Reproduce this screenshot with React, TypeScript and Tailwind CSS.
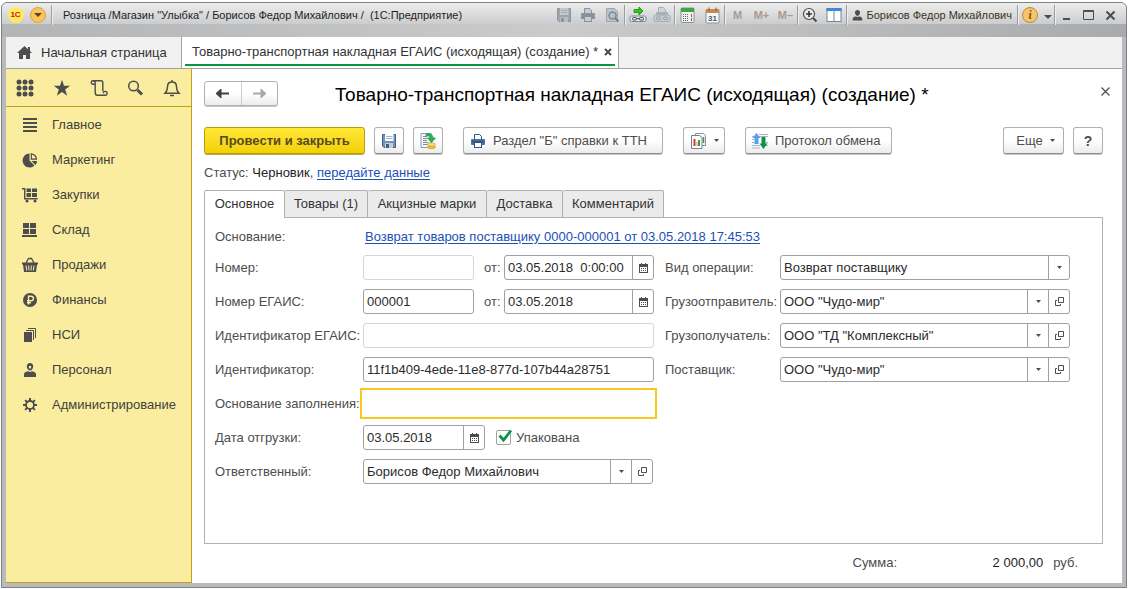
import { useState } from "react";
import type { ReactNode } from "react";
import { clsx } from "clsx";

const ink = "#4d4d4d";

function Separator() {
  return <span className="h-5 w-px shrink-0 bg-[#9b9c9e] shadow-[1px_0_0_#eeeeee]" />;
}

/* ---------- icons ---------- */

function FloppyIcon({ muted = false }: { muted?: boolean }) {
  const body = muted ? "#9aa5af" : "#6f93bd";
  const edge = muted ? "#8a959f" : "#3f5f88";
  const paper = muted ? "#c3c8cc" : "#ffffff";
  return (
    <svg width="16" height="16" viewBox="0 0 16 16">
      <path d="M1.500 1.500h13v13H3l-1.500-1.500z" fill={body} stroke={edge} />
      <rect x="4" y="1" width="8.500" height="7" fill={paper} />
      <path d="M5 3.500h6.500M5 5.500h6.500" stroke={muted ? "#a7b0b7" : "#9db8d6"} />
      <rect x="4" y="10" width="8" height="5" fill={muted ? "#b6bdc3" : "#c9cdd2"} />
      <rect x="5" y="11" width="3" height="4" fill={edge} />
    </svg>
  );
}

function PrinterIcon({ muted = false }: { muted?: boolean }) {
  const body = muted ? "#87929c" : "#48719a";
  const edge = muted ? "#87929c" : "#34557a";
  return (
    <svg width="16" height="16" viewBox="0 0 16 16" className="shrink-0">
      <path d="M4.500 6V1.500h5l2 2V6" fill={muted ? "#c9cdd0" : "#fff"} stroke={edge} />
      <rect x="1" y="6" width="14" height="6" rx="1" fill={body} />
      <path d="M2 8.500h12" stroke={edge} />
      <rect x="4.500" y="9.500" width="7" height="5" fill={muted ? "#c9cdd0" : "#fff"} stroke={edge} />
    </svg>
  );
}

function PreviewIcon() {
  return (
    <svg width="16" height="16" viewBox="0 0 16 16">
      <path d="M2.500 1.500h8l3 3v10h-11z" fill="#bfc5c9" stroke="#9da6ad" />
      <circle cx="8.500" cy="8.500" r="3.500" fill="#b4c1ca" stroke="#7d8a95" strokeWidth="1.500" />
      <path d="m11 11 3.500 3.500" stroke="#75828d" strokeWidth="2" />
    </svg>
  );
}

function LinkBarIcon() {
  return (
    <svg width="18" height="18" viewBox="0 0 18 18">
      <path d="M5 3.500h5V1l4 4-4 4V6.500H5z" fill="#2ecc18" stroke="#17860b" strokeWidth=".8" />
      <rect x="1" y="10" width="16" height="5.500" rx="1.500" fill="#e6e8ea" stroke="#7d8791" />
      <rect x="3.500" y="11.500" width="4" height="2.500" rx="1" fill="none" stroke="#3d4853" />
      <rect x="10.500" y="11.500" width="4" height="2.500" rx="1" fill="none" stroke="#3d4853" />
      <path d="M7 12.700h4" stroke="#3d4853" />
    </svg>
  );
}

function LinkPrinterIcon() {
  return (
    <svg width="18" height="18" viewBox="0 0 18 18">
      <path d="M5.500 8V1.500h5l2 2V8" fill="#d2d5d7" stroke="#a9b0b7" />
      <rect x="3" y="6" width="12" height="4" rx="1" fill="#a9b2bb" />
      <rect x="1" y="9" width="16" height="6.500" rx="1.500" fill="#c6cace" stroke="#a5acb3" />
      <rect x="3.500" y="11" width="4" height="2.500" rx="1" fill="none" stroke="#959ea6" />
      <rect x="10.500" y="11" width="4" height="2.500" rx="1" fill="none" stroke="#959ea6" />
    </svg>
  );
}

function CalculatorIcon() {
  return (
    <svg width="15" height="16" viewBox="0 0 15 16">
      <rect x="1" y="1" width="13" height="14.500" rx="1" fill="#eef1f0" stroke="#8b9590" />
      <rect x="1" y="1" width="13" height="4" fill="#3fa648" />
      <path d="M3 7.500h6M3 9.500h6M3 11.500h6M3 13.500h6" stroke="#5d6a74" strokeDasharray="1 1" />
      <path d="M11.500 7v3" stroke="#d8442f" />
      <path d="M11.500 11v3" stroke="#5d6a74" />
    </svg>
  );
}

function CalendarIcon() {
  return (
    <svg width="15" height="17" viewBox="0 0 15 17">
      <rect x="1" y="2.500" width="13" height="13.500" rx="1" fill="#f7f7f7" stroke="#8492a0" />
      <rect x="1" y="2" width="13" height="4" fill="#c98a50" />
      <path d="M4 .5V4M11 .5V4" stroke="#8a5a30" />
      <text x="7.500" y="14" textAnchor="middle" fontSize="8" fontWeight="bold" fill="#4a5a6a">31</text>
    </svg>
  );
}

function ZoomInIcon() {
  return (
    <svg width="16" height="16" viewBox="0 0 16 16">
      <circle cx="7" cy="7" r="5.500" fill="#eeeeee" stroke="#4b4b4b" strokeWidth="1.200" />
      <path d="M4 7h6M7 4v6" stroke="#333" strokeWidth="1.600" />
      <path d="m11 11 3.500 3.500" stroke="#4b4b4b" strokeWidth="2" />
    </svg>
  );
}

function ColumnsIcon() {
  return (
    <svg width="16" height="16" viewBox="0 0 16 16">
      <rect x="1" y="1.500" width="14" height="13" fill="#fff" stroke="#75879a" />
      <rect x=".5" y="1" width="15" height="3" fill="#3c8ad8" />
      <path d="M8 4v10" stroke="#75879a" />
    </svg>
  );
}

function PersonIcon({ size = 11 }: { size?: number }) {
  return (
    <svg width={size} height={size} viewBox="0 0 14 14" fill={ink}>
      <path d="M7 0c2 0 3.200 1.400 3.200 3.300C10.200 5.500 8.800 7.500 7 7.500S3.800 5.500 3.800 3.300C3.800 1.400 5 0 7 0z" />
      <path d="M1 13.500V11c0-1.500 1.500-2.300 3.500-2.800L7 9l2.500-.8C11.500 8.700 13 9.500 13 11v2.500z" />
    </svg>
  );
}

function Caret() {
  return (
    <svg width="5" height="3" viewBox="0 0 5 3" className="shrink-0">
      <path d="M0 0h5L2.500 3z" fill={ink} />
    </svg>
  );
}

function SmallCalendarIcon() {
  return (
    <svg width="9" height="10" viewBox="0 0 9 10">
      <path d="M0 1h9v9H0z" fill={ink} />
      <path d="M2.500 0v2M6.500 0v2" stroke={ink} />
      <path d="M1 4h7v5H1z" fill="#fff" />
      <path d="M2 5.500h5M2 7.500h5" stroke={ink} strokeDasharray="1 1" />
    </svg>
  );
}

function OpenIcon() {
  return (
    <svg width="9" height="9" viewBox="0 0 9 9" fill="none" stroke={ink}>
      <path d="M3.500.5h5v5h-5z" />
      <path d="M2 3.500H.5v5h5V7" />
    </svg>
  );
}

function ArrowIcon({ color, flip = false }: { color: string; flip?: boolean }) {
  return (
    <svg width="15" height="11" viewBox="0 0 15 11" className={clsx(flip && "-scale-x-100")}>
      <path d="M14 5.500H3" stroke={color} strokeWidth="2" />
      <path d="M6 1 1 5.500 6 10z" fill={color} stroke={color} />
    </svg>
  );
}

function PostIcon() {
  return (
    <svg width="18" height="18" viewBox="0 0 18 18">
      <path d="M2 1.500h10v14H2z" fill="#f5f8fb" stroke="#8b9cac" />
      <path d="M4 4.500h4M4 6.500h4M4 8.500h4M4 10.500h5M4 12.500h5" stroke="#7a8b9c" />
      <path d="M7 2c4-1 7 .5 7 4h2.500l-4 4.500L8.500 6H11c0-1.500-1.500-2.500-4-2z" fill="#22b35b" stroke="#128a41" strokeWidth=".6" />
      <ellipse cx="12.500" cy="15" rx="4" ry="1.800" fill="#f0c040" stroke="#c2922a" strokeWidth=".6" />
      <ellipse cx="12.500" cy="12.500" rx="4" ry="1.800" fill="#fbdc70" stroke="#c2922a" strokeWidth=".6" />
    </svg>
  );
}

function ReportsIcon() {
  return (
    <svg width="17" height="16" viewBox="0 0 17 16">
      <path d="M5.500.5h8l2 2v10h-10z" fill="#f6f8fa" stroke="#8594a3" />
      <path d="M13.500 4v6" stroke="#3b9a48" strokeWidth="1.500" />
      <path d="M1.500 2.500h8l2.500 2v11H1.500z" fill="#fff" stroke="#6f8193" />
      <path d="M4.500 6v7" stroke="#d23c2c" strokeWidth="2" />
      <path d="M7 9v4" stroke="#e77f6c" />
      <path d="M9 7v6" stroke="#3b9a48" strokeWidth="2" />
    </svg>
  );
}

function ExchangeIcon() {
  return (
    <svg width="18" height="18" viewBox="0 0 18 18" className="shrink-0">
      <path d="M8 2.500h9M1 4.500h2M8 4.500h9M1 7.500h2M1 10.500h2M15 10.500h2M1 13.500h8M1 16h8M15 13.500h2" stroke="#a9b7c4" />
      <path d="M5.500 1 9.500 6H7.500v6h-4V6h-2z" fill="#5b9bf0" />
      <path d="M10.500 5h4v6.500h2L12.500 17l-4-5.500h2z" fill="#0b9444" />
    </svg>
  );
}

function HomeIcon() {
  return (
    <svg width="15" height="13" viewBox="0 0 15 13" fill={ink}>
      <path d="M7.500 0 0 7h2v6h4V9h3v4h4V7h2l-2-2V1h-2v2.200z" />
    </svg>
  );
}

/* ---------- sidebar ---------- */

const tools: { label: string; icon: ReactNode }[] = [
  {
    label: "Меню функций",
    icon: (
      <svg width="18" height="18" viewBox="0 0 18 18" fill={ink}>
        {[3, 9, 15].map((y) => [3, 9, 15].map((x) => <circle key={`${x}-${y}`} cx={x} cy={y} r="2.500" />))}
      </svg>
    ),
  },
  {
    label: "Избранное",
    icon: (
      <svg width="18" height="18" viewBox="0 0 18 18" fill={ink}>
        <path d="m9 .8 2 6h6.200l-5 3.700 2 6.300L9 13l-5.200 3.800 2-6.300-5-3.700H7z" />
      </svg>
    ),
  },
  {
    label: "История",
    icon: (
      <svg width="18" height="18" viewBox="0 0 18 18" fill="none" stroke={ink} strokeWidth="1.400">
        <path d="M5 5.300H3A1.700 1.700 0 0 1 3 1.800h8c1.200 0 1.800.7 1.800 1.800v8.700M3 1.800c1.500 0 2.200 1 2.200 2.500v9.400c0 1.500.7 2.500 2.300 2.500h7.700a1.900 1.900 0 1 0-1.900-2" />
      </svg>
    ),
  },
  {
    label: "Поиск",
    icon: (
      <svg width="18" height="18" viewBox="0 0 18 18" fill="none" stroke={ink}>
        <circle cx="7.500" cy="7" r="4.800" strokeWidth="1.500" />
        <path d="m11.500 11 4.500 4.500" strokeWidth="3" />
      </svg>
    ),
  },
  {
    label: "Оповещения",
    icon: (
      <svg width="18" height="18" viewBox="0 0 18 18" fill="none" stroke={ink} strokeWidth="1.500">
        <path d="M9 1v1.500M2 14.200h14c-2-2-2.500-3-2.500-6.500C13.500 4.500 11.500 3 9 3S4.500 4.500 4.500 7.700c0 3.500-.5 4.500-2.500 6.500z" />
        <path d="M7 16.500h4" />
      </svg>
    ),
  },
];

const sections: { label: string; icon: ReactNode }[] = [
  { label: "Главное", icon: <path d="M1 2h14M1 6h14M1 10h14M1 14h14" stroke={ink} strokeWidth="2" /> },
  {
    label: "Маркетинг",
    icon: (
      <>
        <path d="M7.500 1.500v7l5 5A7 7 0 1 1 7.500 1.500z" fill={ink} />
        <path d="M9.300 1.800v5.400h5.200c-.3-3-2.300-5-5.200-5.400z" fill="none" stroke={ink} strokeWidth="1.200" />
        <path d="M9.500 9h5.500c0 1.500-.6 3-1.600 4z" fill={ink} />
      </>
    ),
  },
  {
    label: "Закупки",
    icon: (
      <>
        <path d="M0 1.700h2.700v10h13" fill="none" stroke={ink} strokeWidth="1.400" />
        <path d="M4.500 1.500H9V5H4.500zM10 1.500h5V5h-5zM4.500 6H9v4H4.500zM10 6h5v4h-5z" fill={ink} />
        <circle cx="5" cy="14" r="1.500" fill={ink} />
        <circle cx="13" cy="14" r="1.500" fill={ink} />
      </>
    ),
  },
  {
    label: "Склад",
    icon: <path d="M1 1h6v5H1zM8 1h6v5H8zM1 7h6v5H1zM8 7h6v5H8zM0 13h15v2H0z" fill={ink} />,
  },
  {
    label: "Продажи",
    icon: (
      <>
        <path d="M4 6l2.500-4.500h3L12 6" fill="none" stroke={ink} strokeWidth="1.300" />
        <path d="M0 5.500h16v2H15L14 15H2L1 7.500H0z" fill={ink} />
        <path d="m4 8.500.7 5M6.700 8.500l.2 5M9.300 8.500l-.2 5M12 8.500l-.7 5" stroke="#fbed9f" />
      </>
    ),
  },
  {
    label: "Финансы",
    icon: (
      <>
        <circle cx="8" cy="8" r="7" fill={ink} />
        <path d="M6.500 12.500V4.200h2.700a2.200 2.200 0 0 1 0 4.500H5M5 10.700h4" fill="none" stroke="#fbed9f" strokeWidth="1.400" />
      </>
    ),
  },
  {
    label: "НСИ",
    icon: (
      <>
        <path d="M2 5h8v10H2z" fill={ink} />
        <path d="M4 3.500h7.500V13M6 1.500h7.500V11" fill="none" stroke={ink} />
      </>
    ),
  },
  {
    label: "Персонал",
    icon: (
      <>
        <path d="M8 1c2 0 3.200 1.300 3.200 3.200C11.200 6.300 9.800 8.500 8 8.500S4.800 6.300 4.800 4.200C4.800 2.300 6 1 8 1z" fill={ink} />
        <path d="M6.800 4h2.400c0 1.700-.5 2.700-1.200 2.700S6.800 5.700 6.800 4z" fill="#fbed9f" />
        <path d="M2 15v-2.500c0-2 1.500-2.700 4-3.200l2 .7 2-.7c2.500.5 4 1.200 4 3.200V15z" fill={ink} />
      </>
    ),
  },
  {
    label: "Администрирование",
    icon: (
      <>
        <circle cx="8" cy="8" r="4" fill="none" stroke={ink} strokeWidth="1.800" />
        <path d="M8 1v3M8 12v3M1 8h3M12 8h3M3.100 3.100l2 2M10.900 10.900l2 2M12.900 3.100l-2 2M5.100 10.900l-2 2" stroke={ink} strokeWidth="2" />
      </>
    ),
  },
];

function Sidebar() {
  return (
    <aside className="flex w-[186px] shrink-0 flex-col border-r border-b border-[#bfa21a] bg-[#fbed9f] text-[#404040]">
      <div className="flex h-[38px] items-center justify-between border-b border-[#bfa21a] px-[10px]">
        {tools.map((tool) => (
          <button key={tool.label} type="button" aria-label={tool.label}>
            {tool.icon}
          </button>
        ))}
      </div>
      <nav className="flex flex-col">
        {sections.map((section) => (
          <a key={section.label} href="#" className="flex h-[35px] items-center gap-[14px] pt-px pl-4">
            <svg width="16" height="16" viewBox="0 0 16 16" className="shrink-0">
              {section.icon}
            </svg>
            {section.label}
          </a>
        ))}
      </nav>
    </aside>
  );
}

/* ---------- title bar ---------- */

function BarButton({ label, className, children }: { label: string; className?: string; children: ReactNode }) {
  return (
    <button type="button" aria-label={label} className={clsx("flex h-6 shrink-0 items-center justify-center", className)}>
      {children}
    </button>
  );
}

function TitleBar() {
  return (
    <header>
      <div className="flex h-[21px] items-center rounded-t-[5px] bg-linear-to-b from-[#ededed] to-[#cbccce] pt-[3px] pr-[5px] text-[11px] text-[#1e1e1e]">
        <BarButton label="1С" className="w-[23px] pl-1">
          <span className="flex size-4 items-center justify-center rounded-full bg-[#ffe95c] text-[8px] font-bold text-[#d8101c]">
            1С
          </span>
        </BarButton>
        <BarButton label="Главное меню" className="w-[26px]">
          <span className="flex size-4 items-center justify-center rounded-full border border-[#e0a03c] bg-[#fcc45c]">
            <svg width="8" height="4" viewBox="0 0 8 4">
              <path d="M0 0h8L4 4z" fill="#5e4520" />
            </svg>
          </span>
        </BarButton>
        <Separator />
        <span className="ml-[11px] flex-1 truncate whitespace-pre">
          {'Розница /Магазин "Улыбка" / Борисов Федор Михайлович /  (1С:Предприятие)'}
        </span>
        <BarButton label="Сохранить" className="w-6"><FloppyIcon muted /></BarButton>
        <BarButton label="Печать" className="w-6"><PrinterIcon muted /></BarButton>
        <BarButton label="Просмотр" className="w-6"><PreviewIcon /></BarButton>
        <Separator />
        <BarButton label="Получить ссылку" className="w-[25px]"><LinkBarIcon /></BarButton>
        <BarButton label="Перейти по ссылке" className="w-6"><LinkPrinterIcon /></BarButton>
        <Separator />
        <BarButton label="Калькулятор" className="w-[25px]"><CalculatorIcon /></BarButton>
        <BarButton label="Календарь" className="w-6"><CalendarIcon /></BarButton>
        <Separator />
        {["M", "M+", "M–"].map((m) => (
          <button key={m} type="button" className="h-6 w-6 shrink-0 text-[11px] font-bold text-[#ab9a8e]">
            {m}
          </button>
        ))}
        <Separator />
        <BarButton label="Масштаб" className="w-6"><ZoomInIcon /></BarButton>
        <BarButton label="Панели" className="w-6"><ColumnsIcon /></BarButton>
        <Separator />
        <button type="button" className="flex h-6 shrink-0 items-center gap-[3px] px-[5px] text-[#3f3320]">
          <PersonIcon />
          Борисов Федор Михайлович
        </button>
        <Separator />
        <BarButton label="Информация" className="w-6">
          <span className="flex size-4 items-center justify-center rounded-full border border-[#c08a35] bg-[#f8c469] font-serif text-xs font-bold text-[#7a5a28] italic">
            i
          </span>
        </BarButton>
        <BarButton label="Сервис" className="w-3 pt-1">
          <svg width="8" height="4" viewBox="0 0 8 4">
            <path d="M0 0h8L4 4z" fill={ink} />
          </svg>
        </BarButton>
        <Separator />
        <BarButton label="Свернуть" className="w-[22px]">
          <svg width="11" height="11" viewBox="0 0 11 11"><path d="M2 9h7" stroke={ink} strokeWidth="2" /></svg>
        </BarButton>
        <BarButton label="Развернуть" className="w-[22px]">
          <svg width="11" height="11" viewBox="0 0 11 11"><path d="M.5.5h10v9H.5zM.5 1.500h10" fill="none" stroke={ink} /></svg>
        </BarButton>
        <BarButton label="Закрыть" className="w-[22px]">
          <svg width="11" height="11" viewBox="0 0 11 11"><path d="m1.500 1.500 8 8m0-8-8 8" stroke={ink} strokeWidth="2" /></svg>
        </BarButton>
      </div>
      <div className="h-[13px] bg-linear-to-r from-[#b3b4b6] via-[#cbcbcb] to-[#a9aaac]" />
    </header>
  );
}

/* ---------- form controls ---------- */

const box = "flex h-[25px] rounded-[3px] border border-[#a0a0a0] bg-white text-[#2b2b2b]";
const cell = "flex w-[21px] shrink-0 items-center justify-center border-l border-[#a0a0a0]";

function Field({ id, label, children }: { id: string; label: string; children: ReactNode }) {
  return (
    <div className="flex h-[25px] items-center">
      <label htmlFor={id} className="w-[148px] shrink-0 whitespace-nowrap">
        {label}
      </label>
      {children}
    </div>
  );
}

function DateInput({ id, value, className }: { id: string; value: string; className?: string }) {
  return (
    <div className={clsx(box, className)}>
      <input id={id} defaultValue={value} className="min-w-0 flex-1 bg-transparent pl-[3px] whitespace-pre outline-none" />
      <button type="button" aria-label="Выбрать дату" className={cell}>
        <SmallCalendarIcon />
      </button>
    </div>
  );
}

function Picker({ id, value, open = true, className }: { id: string; value: string; open?: boolean; className?: string }) {
  return (
    <div className={clsx(box, className)}>
      <div className="relative flex min-w-0 flex-1">
        <select id={id} className="w-full appearance-none bg-transparent pr-6 pl-[3px] outline-none">
          <option>{value}</option>
        </select>
        <span className={clsx(cell, "pointer-events-none absolute inset-y-0 right-0")}>
          <Caret />
        </span>
      </div>
      {open && (
        <button type="button" aria-label="Открыть" className={cell}>
          <OpenIcon />
        </button>
      )}
    </div>
  );
}

const textBox = "h-[25px] rounded-[3px] border bg-white px-[3px] text-[#2b2b2b] outline-none";

function LeftFields() {
  const [packed, setPacked] = useState(true);
  return (
    <div className="flex w-[439px] shrink-0 flex-col gap-[9px]">
      <Field id="number" label="Номер:">
        <input id="number" className={clsx(textBox, "w-[111px] border-[#d6d6d6]")} />
        <label htmlFor="date" className="ml-[10px] w-[21px]">от:</label>
        <DateInput id="date" value="03.05.2018  0:00:00" className="w-[150px]" />
      </Field>
      <Field id="egais-number" label="Номер ЕГАИС:">
        <input id="egais-number" defaultValue="000001" className={clsx(textBox, "w-[111px] border-[#a0a0a0]")} />
        <label htmlFor="egais-date" className="ml-[10px] w-[21px]">от:</label>
        <DateInput id="egais-date" value="03.05.2018" className="w-[150px]" />
      </Field>
      <Field id="egais-id" label="Идентификатор ЕГАИС:">
        <input id="egais-id" className={clsx(textBox, "w-[291px] border-[#d6d6d6]")} />
      </Field>
      <Field id="ident" label="Идентификатор:">
        <input id="ident" defaultValue="11f1b409-4ede-11e8-877d-107b44a28751" className={clsx(textBox, "w-[291px] border-[#a0a0a0]")} />
      </Field>
      <Field id="fill-base" label="Основание заполнения:">
        <input id="fill-base" className="h-[25px] w-[291px] bg-white px-[3px] outline-2 outline-offset-1 outline-[#f9c81e]" />
      </Field>
      <Field id="ship-date" label="Дата отгрузки:">
        <DateInput id="ship-date" value="03.05.2018" className="w-[122px]" />
        <label className="ml-[11px] flex items-center gap-[5px]">
          <span className="relative flex">
            <input
              type="checkbox"
              checked={packed}
              onChange={(e) => setPacked(e.target.checked)}
              className="size-[15px] appearance-none rounded-[2px] border border-[#a0a0a0] bg-white"
            />
            {packed && (
              <svg width="15" height="14" viewBox="0 0 15 14" className="pointer-events-none absolute -top-px left-0.5">
                <path d="m1.500 6.500 4 4.500L13 1.500" fill="none" stroke="#0b9444" strokeWidth="2.800" />
              </svg>
            )}
          </span>
          Упакована
        </label>
      </Field>
      <Field id="owner" label="Ответственный:">
        <Picker id="owner" value="Борисов Федор Михайлович" className="w-[290px]" />
      </Field>
    </div>
  );
}

const parties = [
  { id: "operation", label: "Вид операции:", value: "Возврат поставщику", open: false },
  { id: "sender", label: "Грузоотправитель:", value: 'ООО "Чудо-мир"', open: true },
  { id: "receiver", label: "Грузополучатель:", value: 'ООО "ТД "Комплексный"', open: true },
  { id: "supplier", label: "Поставщик:", value: 'ООО "Чудо-мир"', open: true },
];

function RightFields() {
  return (
    <div className="flex flex-col gap-[9px]">
      {parties.map((row) => (
        <div key={row.id} className="flex items-center">
          <label htmlFor={row.id} className="w-[115px] shrink-0 whitespace-nowrap">
            {row.label}
          </label>
          <Picker id={row.id} value={row.value} open={row.open} className="w-[290px]" />
        </div>
      ))}
    </div>
  );
}

/* ---------- document ---------- */

const button =
  "flex h-[27px] shrink-0 items-center rounded-[3px] border border-[#b0b0b0] border-b-[#8e8e8e] bg-linear-to-b from-white from-50% to-[#ececec] text-[#4d4d4d] shadow-[0_1px_0_#c4c4c4]";

function Toolbar() {
  return (
    <div className="mt-[21px] flex items-center">
      <button
        type="button"
        className="h-[27px] w-[161px] shrink-0 rounded-[3px] border border-[#b49d10] bg-linear-to-b from-[#ffe833] to-[#f3d100] font-bold text-[#574b1e] shadow-[0_1px_0_#b9a642]"
      >
        Провести и закрыть
      </button>
      <button type="button" aria-label="Записать" className={clsx(button, "ml-[9px] w-[30px] justify-center")}>
        <FloppyIcon />
      </button>
      <button type="button" aria-label="Провести" className={clsx(button, "ml-[9px] w-[30px] justify-center")}>
        <PostIcon />
      </button>
      <button type="button" className={clsx(button, "ml-5 w-[200px] gap-[7px] pl-[6px]")}>
        <PrinterIcon />
        Раздел "Б" справки к ТТН
      </button>
      <button type="button" aria-label="Отчеты" className={clsx(button, "ml-5 w-[42px] gap-[7px] pl-[6px]")}>
        <ReportsIcon />
        <Caret />
      </button>
      <button type="button" className={clsx(button, "ml-5 w-[147px] gap-[6px] pl-[5px]")}>
        <ExchangeIcon />
        Протокол обмена
      </button>
      <button type="button" className={clsx(button, "ml-auto w-[61px] justify-center gap-[7px] pl-1")}>
        Еще
        <Caret />
      </button>
      <button type="button" aria-label="Справка" className={clsx(button, "ml-[9px] w-[30px] justify-center text-sm font-bold")}>
        ?
      </button>
    </div>
  );
}

const tabs = [
  { label: "Основное", width: "w-[81px]" },
  { label: "Товары (1)", width: "w-[83px]" },
  { label: "Акцизные марки", width: "w-[119px]" },
  { label: "Доставка", width: "w-[76px]" },
  { label: "Комментарий", width: "w-[101px]" },
];

function Tabs() {
  const [active, setActive] = useState("Основное");
  return (
    <div role="tablist" className="flex">
      {tabs.map((tab) => (
        <button
          key={tab.label}
          type="button"
          role="tab"
          aria-selected={active === tab.label}
          onClick={() => setActive(tab.label)}
          className={clsx(
            "rounded-t-[2px] border-t border-r border-[#b0b0b0] whitespace-nowrap text-[#333] first:border-l",
            tab.width,
            active === tab.label ? "relative -mb-px h-7 bg-white pb-px" : "h-[27px] bg-[#ebebeb]",
          )}
        >
          {tab.label}
        </button>
      ))}
    </div>
  );
}

function Document() {
  return (
    <main className="flex min-w-0 flex-1 flex-col bg-white pr-[19px] pl-3">
      <div className="mt-3 flex h-[25px] items-center">
        <div className="flex h-[25px] w-[74px] shrink-0 rounded-[3px] border border-[#b0b0b0] bg-linear-to-b from-white from-50% to-[#ececec] shadow-[0_1px_0_#c4c4c4]">
          <button type="button" aria-label="Назад" className="flex flex-1 items-center justify-center border-r border-[#cfcfcf]">
            <ArrowIcon color="#404040" />
          </button>
          <button type="button" aria-label="Вперед" className="flex flex-1 items-center justify-center">
            <ArrowIcon color="#a8a8a8" flip />
          </button>
        </div>
        <h1 className="ml-[57px] flex-1 pt-[3px] text-[19px] whitespace-nowrap text-black">
          Товарно-транспортная накладная ЕГАИС (исходящая) (создание) *
        </h1>
        <button type="button" aria-label="Закрыть форму" className="-mr-3 flex size-5 items-center justify-center self-start">
          <svg width="9" height="9" viewBox="0 0 9 9">
            <path d="m.5.5 8 8m0-8-8 8" stroke={ink} strokeWidth="1.200" />
          </svg>
        </button>
      </div>

      <Toolbar />

      <p className="mt-[9px] h-5 leading-5">
        Статус: <span className="text-[#1e1e1e]">Черновик</span>,{" "}
        <a href="#" className="text-[#1d50b5] underline underline-offset-2">передайте данные</a>
      </p>

      <div className="mt-[7px] flex flex-1 flex-col">
        <Tabs />
        <section className="flex-1 border border-[#b0b0b0] px-[10px] pt-1.5">
          <div className="flex h-[25px] items-center">
            <span className="w-[150px] shrink-0">Основание:</span>
            <a href="#" className="text-[#1d50b5] underline underline-offset-2">
              Возврат товаров поставщику 0000-000001 от 03.05.2018 17:45:53
            </a>
          </div>
          <div className="mt-1.5 flex gap-[11px]">
            <LeftFields />
            <RightFields />
          </div>
        </section>
      </div>

      <footer className="flex h-[39px] items-center justify-end pr-[25px] pb-0.5">
        <span className="w-[140px]">Сумма:</span>
        <span className="text-[#1e1e1e]">2 000,00</span>
        <span className="ml-[10px]">руб.</span>
      </footer>
    </main>
  );
}

export default function App() {
  return (
    <div className="flex min-h-screen flex-col bg-white px-px pt-0.5 pb-px font-['Liberation_Sans',Arial,sans-serif] text-[13px] text-[#4d4d4d]">
      <div className="flex flex-1 flex-col rounded-t-[6px] border border-[#7f8082] bg-[#b9babc]">
        <TitleBar />
        <div className="mx-1 mb-1 flex flex-1 flex-col bg-white">
          <div className="flex h-8 border-b border-[#a0a0a0] bg-[#f1f1f1] text-[#333]">
            <a href="#" className="flex w-[176px] items-center gap-[9px] border-r border-[#a0a0a0] pl-[11px]">
              <HomeIcon />
              Начальная страница
            </a>
            <div className="flex border-r border-[#a0a0a0] bg-white px-[3px] pb-0.5">
              <div className="flex items-center gap-[5px] border-b-2 border-[#0b9444] pt-[3px] pr-[3px] pl-[7px]">
                <a href="#">Товарно-транспортная накладная ЕГАИС (исходящая) (создание) *</a>
                <button type="button" aria-label="Закрыть вкладку" className="flex size-[9px] items-center justify-center">
                  <svg width="8" height="8" viewBox="0 0 8 8">
                    <path d="m1 1 6 6m0-6L1 7" stroke={ink} strokeWidth="2" />
                  </svg>
                </button>
              </div>
            </div>
          </div>
          <div className="flex flex-1">
            <Sidebar />
            <Document />
          </div>
        </div>
      </div>
    </div>
  );
}
